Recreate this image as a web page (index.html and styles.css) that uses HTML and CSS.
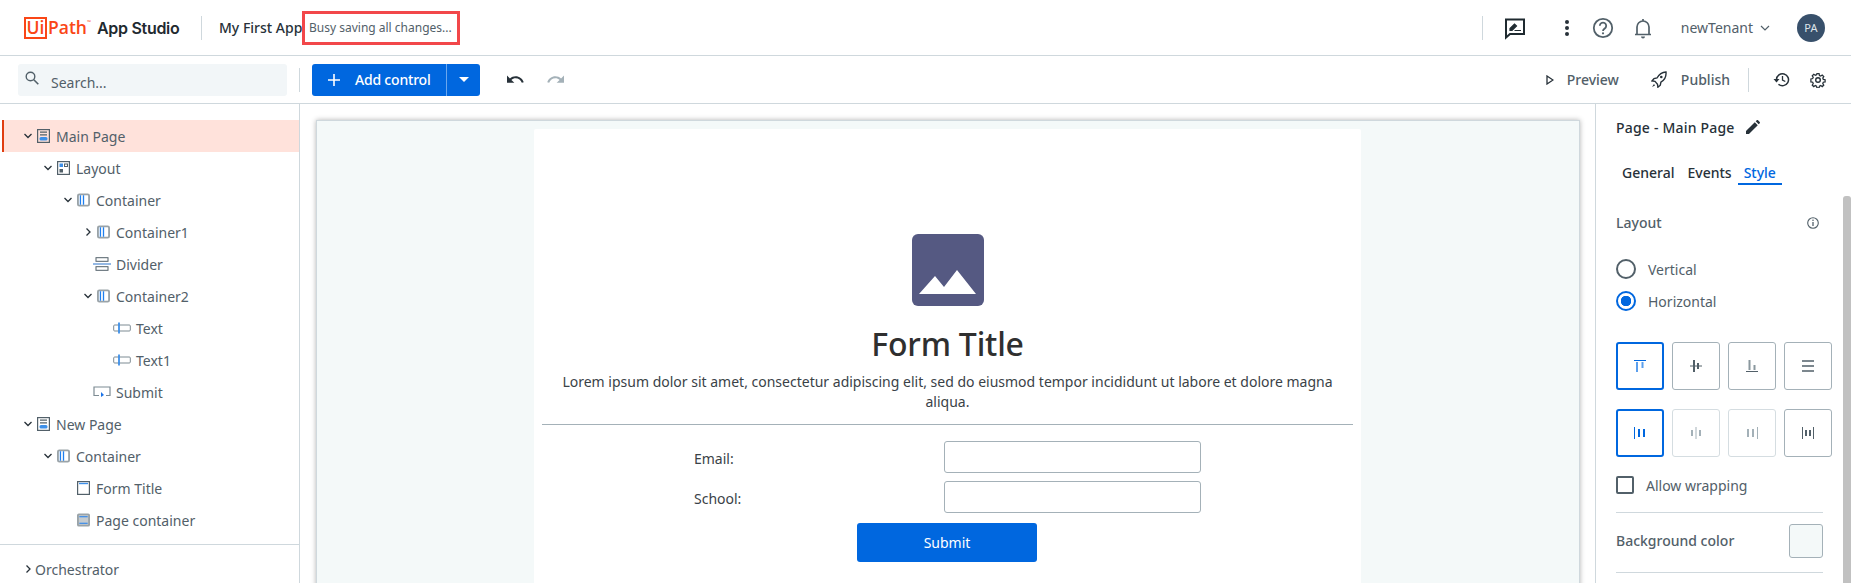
FILE: index.html
```html
<!DOCTYPE html>
<html lang="en">
<head>
    <meta charset="UTF-8">
    <title>UiPath App Studio</title>
    <link rel="stylesheet" href="styles.css">
</head>
<body>
    <header class="topbar">
        <div class="logo">
            <span class="logo-ui">Ui</span><span class="logo-path">Path</span><span class="logo-tm">™</span>
        </div>
        <span class="product">App Studio</span>
        <span class="vsep vsep-head"></span>
        <span class="app-name">My First App</span>
        <span class="busy">Busy saving all changes...</span>
        <div class="spacer"></div>
        <span class="vsep"></span>
        <svg class="top-icon feedback" width="24" height="24" viewBox="0 0 24 24"><path d="M3 3.500h18v14.500H7l-4 3.500z" fill="none" stroke="#1f2a30" stroke-width="2"/><path d="M7 14.500v-2l4.500-4.500 2 2-4.500 4.500zM11.500 14.500h6.500" fill="#1f2a30" stroke="#1f2a30" stroke-width="1.200"/></svg>
        <svg class="top-icon dots" width="6" height="18" viewBox="0 0 6 18"><circle cx="3" cy="3" r="2" fill="#273139"/><circle cx="3" cy="9" r="2" fill="#273139"/><circle cx="3" cy="15" r="2" fill="#273139"/></svg>
        <svg class="top-icon help" width="22" height="22" viewBox="0 0 22 22"><circle cx="11" cy="11" r="9.200" fill="none" stroke="#526069" stroke-width="1.800"/><path d="M7.800 8.800a3.200 3.200 0 1 1 4.800 2.800c-1 .6-1.600 1.100-1.600 2.400" fill="none" stroke="#526069" stroke-width="1.800"/><circle cx="11" cy="16.300" r="1.100" fill="#526069"/></svg>
        <svg class="top-icon bell" width="18" height="22" viewBox="0 0 18 22"><path d="M1 17.500h16M3 17.500v-7.500a6 6 0 0 1 12 0v7.500M9 2v2" fill="none" stroke="#526069" stroke-width="1.700"/><path d="M7 19.500h4a2 2 0 0 1-4 0z" fill="#526069"/></svg>
        <span class="tenant">newTenant</span>
        <svg class="tenant-chev" width="10" height="6" viewBox="0 0 10 6"><path d="M1 1l4 4 4-4" fill="none" stroke="#526069" stroke-width="1.200"/></svg>
        <span class="avatar">PA</span>
    </header>

    <div class="toolbar">
        <div class="search">
            <svg width="14" height="14" viewBox="0 0 14 14"><circle cx="5.500" cy="5.500" r="4.300" fill="none" stroke="#526069" stroke-width="1.400"/><path d="M8.800 8.800l4.500 4.500" stroke="#526069" stroke-width="1.600"/></svg>
            <span>Search...</span>
        </div>
        <span class="vsep vsep-tool"></span>
        <div class="add-btn">
            <span class="add-main">
                <svg width="14" height="14" viewBox="0 0 14 14"><path d="M7 1v12M1 7h12" stroke="#fff" stroke-width="1.600"/></svg>
                Add control
            </span>
            <span class="add-caret"><i></i></span>
        </div>
        <svg class="undo" width="18" height="10" viewBox="2 7 22 11"><path d="M12.500 8c-2.650 0-5.050.99-6.900 2.600L2 7v9h9l-3.620-3.620c1.390-1.160 3.160-1.880 5.120-1.880 3.540 0 6.550 2.310 7.600 5.500l2.370-.78C21.080 11.030 17.150 8 12.500 8z" fill="#273139"/></svg>
        <svg class="redo" width="18" height="10" viewBox="0 7 22 11"><path d="M18.400 10.600C16.550 8.990 14.150 8 11.500 8c-4.650 0-8.580 3.030-9.970 7.220L3.900 16c1.050-3.190 4.050-5.500 7.600-5.500 1.950 0 3.730.72 5.120 1.880L13 16h9V7l-3.600 3.600z" fill="#a4b1b8"/></svg>
        <div class="spacer"></div>
        <svg class="play" width="8" height="10" viewBox="0 0 8 10"><path d="M1 1l6 4-6 4z" fill="none" stroke="#273139" stroke-width="1.300"/></svg>
        <span class="tool-label preview">Preview</span>
        <svg class="rocket" width="16" height="17" viewBox="0 0 16 17"><path d="M15 1c-4 .3-7 2.500-9 6l-3 .6-2 2.400 3 .4 2.500 2.800.4 3 2.400-2 .6-3c3.500-2 5.500-5.500 5.100-10.200z" fill="none" stroke="#273139" stroke-width="1.400"/><circle cx="10.300" cy="6" r="1.300" fill="#273139"/><path d="M3 13l-2 3 3-1.500" fill="#273139"/></svg>
        <span class="tool-label publish">Publish</span>
        <span class="vsep vsep-pub"></span>
        <svg class="history" width="17" height="15" viewBox="0 0 17 15"><path d="M3.500 7.500a6 6 0 1 1 2 4.700" fill="none" stroke="#273139" stroke-width="1.500"/><path d="M0.500 7h6L3.500 10.500z" fill="#273139"/><path d="M9.500 4v4l2.800 1.500" fill="none" stroke="#273139" stroke-width="1.300"/></svg>
        <svg class="gear" width="16" height="16" viewBox="0 0 16 16"><circle cx="8" cy="8" r="2.300" fill="none" stroke="#273139" stroke-width="1.400"/><path d="M6.800 1h2.400l.4 2 1.400.6 1.700-1.100 1.700 1.700-1.100 1.700.6 1.400 2 .4v2.400l-2 .4-.6 1.400 1.100 1.700-1.700 1.700-1.700-1.100-1.400.6-.4 2H6.800l-.4-2-1.400-.6-1.700 1.100-1.700-1.700 1.100-1.700-.6-1.400-2-.4V6.800l2-.4.6-1.400-1.100-1.700 1.700-1.700 1.700 1.100 1.400-.6z" transform="translate(.8 .8) scale(.9)" fill="none" stroke="#273139" stroke-width="1.400"/></svg>
    </div>

    <div class="workspace">
        <aside class="tree">
            <ul class="tree-list">
                <li class="row lvl-0 selected">
                    <svg class="chev" viewBox="0 0 12 12"><path d="M2.500 4l3.500 3.500L9.500 4"/></svg>
                    <svg class="node" viewBox="0 0 13 14"><rect x=".6" y=".6" width="11.800" height="12.800" fill="none" stroke="#526069" stroke-width="1.200"/><path d="M3 3.200h7M3 5.800h7" stroke="#526069" stroke-width="1.200"/><rect x="2.500" y="8" width="8" height="3.500" rx="1.500" fill="#3d8fe8"/></svg>
                    Main Page
                </li>
                <li class="row lvl-1">
                    <svg class="chev" viewBox="0 0 12 12"><path d="M2.500 4l3.500 3.500L9.500 4"/></svg>
                    <svg class="node" viewBox="0 0 13 14"><rect x=".6" y=".6" width="11.800" height="12.800" fill="none" stroke="#526069" stroke-width="1.200"/><rect x="2.500" y="2.500" width="3.500" height="3.500" fill="#3d8fe8"/><rect x="7.500" y="3" width="3" height="2.500" fill="none" stroke="#526069"/><rect x="2.500" y="8" width="3.500" height="3.500" fill="#526069"/></svg>
                    Layout
                </li>
                <li class="row lvl-2">
                    <svg class="chev" viewBox="0 0 12 12"><path d="M2.500 4l3.500 3.500L9.500 4"/></svg>
                    <svg class="node" viewBox="0 0 14 14"><rect x="1" y="1" width="12" height="12" rx="1.500" fill="#fff" stroke="#9aa3a8" stroke-width="2"/><path d="M3.700 2v10M7 2v10" stroke="#1f7fee" stroke-width="1.400"/></svg>
                    Container
                </li>
                <li class="row lvl-3">
                    <svg class="chev" viewBox="0 0 12 12"><path d="M4.500 2.500L8 6l-3.500 3.500"/></svg>
                    <svg class="node" viewBox="0 0 14 14"><rect x="1" y="1" width="12" height="12" rx="1.500" fill="#fff" stroke="#9aa3a8" stroke-width="2"/><path d="M3.700 2v10M7 2v10" stroke="#1f7fee" stroke-width="1.400"/></svg>
                    Container1
                </li>
                <li class="row lvl-3">
                    <span class="no-chev"></span>
                    <svg class="node node-wide" viewBox="0 0 18 14"><rect x="3" y=".7" width="12" height="3.600" fill="none" stroke="#526069"/><rect x="3" y="9.700" width="12" height="3.600" fill="none" stroke="#526069"/><path d="M0 7h18" stroke="#7aa7de" stroke-width="1.600"/></svg>
                    Divider
                </li>
                <li class="row lvl-3">
                    <svg class="chev" viewBox="0 0 12 12"><path d="M2.500 4l3.500 3.500L9.500 4"/></svg>
                    <svg class="node" viewBox="0 0 14 14"><rect x="1" y="1" width="12" height="12" rx="1.500" fill="#fff" stroke="#9aa3a8" stroke-width="2"/><path d="M3.700 2v10M7 2v10" stroke="#1f7fee" stroke-width="1.400"/></svg>
                    Container2
                </li>
                <li class="row lvl-4">
                    <span class="no-chev"></span>
                    <svg class="node node-wide" viewBox="0 0 18 12"><rect x=".7" y="3" width="16.600" height="6" rx="1" fill="none" stroke="#7d8b93"/><path d="M6 .5v11" stroke="#3d8fe8" stroke-width="1.800"/></svg>
                    Text
                </li>
                <li class="row lvl-4">
                    <span class="no-chev"></span>
                    <svg class="node node-wide" viewBox="0 0 18 12"><rect x=".7" y="3" width="16.600" height="6" rx="1" fill="none" stroke="#7d8b93"/><path d="M6 .5v11" stroke="#3d8fe8" stroke-width="1.800"/></svg>
                    Text1
                </li>
                <li class="row lvl-3">
                    <span class="no-chev"></span>
                    <svg class="node node-wide" viewBox="0 0 18 12"><path d="M6 9.500H1V1h16v8.500h-4" fill="none" stroke="#7d8b93" stroke-width="1.200"/><path d="M8 6v5l3-2z" fill="#1a73e8"/></svg>
                    Submit
                </li>
                <li class="row lvl-0">
                    <svg class="chev" viewBox="0 0 12 12"><path d="M2.500 4l3.500 3.500L9.500 4"/></svg>
                    <svg class="node" viewBox="0 0 13 14"><rect x=".6" y=".6" width="11.800" height="12.800" fill="none" stroke="#526069" stroke-width="1.200"/><path d="M3 3.200h7M3 5.800h7" stroke="#526069" stroke-width="1.200"/><rect x="2.500" y="8" width="8" height="3.500" rx="1.500" fill="#3d8fe8"/></svg>
                    New Page
                </li>
                <li class="row lvl-1">
                    <svg class="chev" viewBox="0 0 12 12"><path d="M2.500 4l3.500 3.500L9.500 4"/></svg>
                    <svg class="node" viewBox="0 0 14 14"><rect x="1" y="1" width="12" height="12" rx="1.500" fill="#fff" stroke="#9aa3a8" stroke-width="2"/><path d="M3.700 2v10M7 2v10" stroke="#1f7fee" stroke-width="1.400"/></svg>
                    Container
                </li>
                <li class="row lvl-2">
                    <span class="no-chev"></span>
                    <svg class="node" viewBox="0 0 13 14"><rect x=".6" y=".6" width="11.800" height="12.800" fill="none" stroke="#526069" stroke-width="1.200"/><path d="M2 2.500h9" stroke="#3d8fe8" stroke-width="1.400"/></svg>
                    Form Title
                </li>
                <li class="row lvl-2">
                    <span class="no-chev"></span>
                    <svg class="node" viewBox="0 0 14 14"><rect x="1" y="1" width="12" height="12" rx="1" fill="#c5cbcf" stroke="#9aa3a8" stroke-width="2"/><path d="M2.500 3.500h9M2.500 10.500h9" stroke="#1f7fee" stroke-width="1.300"/></svg>
                    Page container
                </li>
            </ul>
            <div class="tree-foot">
                <svg class="chev" viewBox="0 0 12 12"><path d="M4.500 2.500L8 6l-3.500 3.500"/></svg>
                Orchestrator
            </div>
        </aside>

        <main class="stage">
            <div class="canvas">
                <div class="form-page">
                    <div class="logo-box">
                        <svg width="57" height="24" viewBox="0 0 57 24"><path d="M0 24L16 6l9 11L38 0l19 24z" fill="#fff"/></svg>
                    </div>
                    <h1 class="form-title">Form Title</h1>
                    <p class="form-desc">Lorem ipsum dolor sit amet, consectetur adipiscing elit, sed do eiusmod tempor incididunt ut labore et dolore magna aliqua.</p>
                    <hr class="form-rule">
                    <div class="field">
                        <label>Email:</label>
                        <span class="input"></span>
                    </div>
                    <div class="field">
                        <label>School:</label>
                        <span class="input"></span>
                    </div>
                    <button class="submit">Submit</button>
                </div>
            </div>
        </main>

        <aside class="props">
            <div class="props-title">
                Page - Main Page
                <svg width="14" height="14" viewBox="0 0 15 15"><path d="M0 15v-3.200L9.400 2.400l3.200 3.200L3.200 15zM10.400 1.400L11.500.3c.4-.4 1-.4 1.400 0l1.800 1.800c.4.4.4 1 0 1.400l-1.100 1.100z" fill="#273139"/></svg>
            </div>
            <div class="tabs">
                <span class="tab">General</span>
                <span class="tab">Events</span>
                <span class="tab active">Style</span>
            </div>
            <div class="section-head">
                <span>Layout</span>
                <svg width="12" height="12" viewBox="0 0 12 12"><circle cx="6" cy="6" r="5.300" fill="none" stroke="#526069" stroke-width="1.100"/><path d="M6 5v4" stroke="#526069" stroke-width="1.300"/><circle cx="6" cy="3.300" r=".8" fill="#526069"/></svg>
            </div>
            <div class="radio-row"><span class="radio"></span>Vertical</div>
            <div class="radio-row"><span class="radio checked"></span>Horizontal</div>

            <div class="align-grid">
                <span class="align on"><svg viewBox="0 0 12 12"><path d="M0 .5h12" stroke="#0067df"/><path d="M3 2v10M8.500 2v6" stroke="#5b9fed" stroke-width="2"/></svg></span>
                <span class="align"><svg viewBox="0 0 12 12"><path d="M0 6h12" stroke="#526069"/><path d="M4 0v12M8 3v6" stroke="#526069" stroke-width="2"/></svg></span>
                <span class="align"><svg viewBox="0 0 12 12"><path d="M0 11.500h12" stroke="#526069"/><path d="M3.500 0v10M8.500 5v5" stroke="#8a979e" stroke-width="2"/></svg></span>
                <span class="align"><svg viewBox="0 0 12 12"><path d="M0 1h12M0 6h12M0 11h12" stroke="#526069" stroke-width="1.300"/></svg></span>
                <span class="align on"><svg viewBox="0 0 12 12"><path d="M.5 0v12" stroke="#0067df"/><path d="M5 2v8M10 2v8" stroke="#0067df" stroke-width="2"/></svg></span>
                <span class="align off"><svg viewBox="0 0 12 12"><path d="M6 0v12" stroke="#a4b1b8"/><path d="M2 3v6M10 3v6" stroke="#a4b1b8" stroke-width="2"/></svg></span>
                <span class="align off"><svg viewBox="0 0 12 12"><path d="M11.500 0v12" stroke="#a4b1b8"/><path d="M2 2v8M7 2v8" stroke="#a4b1b8" stroke-width="2"/></svg></span>
                <span class="align"><svg viewBox="0 0 12 12"><path d="M.5 0v12M11.500 0v12" stroke="#526069"/><path d="M4 3v6M8 3v6" stroke="#526069" stroke-width="2"/></svg></span>
            </div>

            <div class="check-row"><span class="checkbox"></span>Allow wrapping</div>
            <div class="color-row">
                <span>Background color</span>
                <span class="swatch"></span>
            </div>
            <div class="props-scroll"></div>
        </aside>
    </div>
</body>
</html>
```

FILE: styles.css
```css
* {
    box-sizing: border-box;
}
html, body {
    height: 100%;
}
body {
    margin: 0;
    font-family: "Noto Sans", Arial, sans-serif;
    font-size: 14px;
    color: #526069;
    background: #fff;
    overflow: hidden;
    display: flex;
    flex-direction: column;
}
.spacer {
    flex: 1;
}
.vsep {
    display: block;
    width: 1px;
    height: 24px;
    background: #cfd8dd;
}

/* top bar */
.topbar {
    height: 56px;
    flex: none;
    display: flex;
    align-items: center;
    padding-left: 24px;
    border-bottom: 1px solid #cfd8dd;
}
.logo {
    display: flex;
    align-items: center;
    font-family: "Open Sans", sans-serif;
    font-weight: 600;
    color: #fa4616;
    font-size: 17.500px;
    line-height: 1;
    width: 65px;
    flex: none;
}
.logo-ui {
    width: 23px;
    height: 22px;
    border: 2px solid #fa4616;
    line-height: 17px;
    text-align: center;
    flex: none;
}
.logo-path {
    margin-left: 1px;
}
.logo-tm {
    font-size: 5px;
    align-self: flex-start;
    margin-top: 3px;
}
.product {
    font-family: Inter, sans-serif;
    font-weight: 600;
    font-size: 16px;
    color: #1f2a30;
    letter-spacing: -0.3px;
    width: 84px;
    margin-left: 8px;
    white-space: nowrap;
}
.vsep-head {
    margin-left: 20px;
}
.app-name {
    margin-left: 17px;
    font-size: 14px;
    font-weight: 500;
    color: #273139;
    white-space: nowrap;
    width: 83px;
    flex: none;
}
.busy {
    width: 158px;
    height: 34px;
    border: 3px solid #f2474a;
    font-size: 12px;
    line-height: 28px;
    padding-left: 4px;
    white-space: nowrap;
    color: #526069;
}
.top-icon {
    flex: none;
}
.feedback {
    margin-left: 20px;
}
.dots {
    margin-left: 37px;
}
.help {
    margin-left: 22px;
}
.bell {
    margin-left: 20px;
}
.tenant {
    margin-left: 29px;
    color: #526069;
    font-size: 14px;
}
.tenant-chev {
    margin-left: 7px;
}
.avatar {
    width: 28px;
    height: 28px;
    border-radius: 50%;
    background: #38506b;
    color: #dfe5ea;
    font-size: 11px;
    letter-spacing: 0.3px;
    text-align: center;
    line-height: 28px;
    margin-left: 27px;
    margin-right: 26px;
}

/* toolbar */
.toolbar {
    height: 48px;
    flex: none;
    display: flex;
    align-items: center;
    padding-left: 18px;
    border-bottom: 1px solid #cfd8dd;
}
.search {
    width: 269px;
    height: 32px;
    background: #f2f6f8;
    border-radius: 3px;
    display: flex;
    align-items: center;
    padding-left: 7px;
    font-size: 14px;
    color: #526069;
}
.search svg {
    margin-top: -3px;
}
.search span {
    margin-left: 12px;
    padding-top: 5px;
}
.vsep-tool {
    margin-left: 12px;
}
.add-btn {
    margin-left: 12px;
    width: 168px;
    height: 32px;
    background: #0067df;
    border-radius: 3px;
    color: #fff;
    font-size: 14px;
    font-weight: 500;
    display: flex;
    align-items: center;
}
.add-main {
    width: 135px;
    display: flex;
    align-items: center;
    gap: 14px;
    padding-left: 15px;
    white-space: nowrap;
    height: 100%;
    border-right: 1px solid #6aa7ee;
    letter-spacing: -0.2px;
}
.add-caret {
    flex: 1;
    display: flex;
    justify-content: center;
}
.add-caret i {
    display: block;
    border-left: 5px solid transparent;
    border-right: 5px solid transparent;
    border-top: 5px solid #fff;
}
.undo {
    margin-left: 27px;
}
.redo {
    margin-left: 21px;
}
.play {
    margin-right: 13px;
}
.tool-label {
    color: #526069;
    font-weight: 500;
    font-size: 14px;
}
.rocket {
    margin-left: 32px;
}
.publish {
    margin-left: 14px;
}
.vsep-pub {
    margin-left: 18px;
}
.history {
    margin-left: 24px;
}
.gear {
    margin-left: 20px;
    margin-right: 25px;
}

/* main area */
.workspace {
    flex: 1;
    display: flex;
    min-height: 0;
}
.tree {
    width: 300px;
    flex: none;
    border-right: 1px solid #cfd8dd;
    padding-top: 16px;
}
.tree-list {
    list-style: none;
    margin: 0;
    padding: 0 0 8px 2px;
    border-bottom: 1px solid #cfd8dd;
}
.row {
    height: 32px;
    display: flex;
    align-items: center;
    white-space: nowrap;
    font-size: 14px;
}
.selected {
    background: #ffe2db;
    border-left: 2px solid #e03d10;
}
.lvl-0 {
    padding-left: 20px;
}
.lvl-0.selected {
    padding-left: 18px;
}
.lvl-1 {
    padding-left: 40px;
}
.lvl-2 {
    padding-left: 60px;
}
.lvl-3 {
    padding-left: 80px;
}
.lvl-4 {
    padding-left: 100px;
}
.chev {
    width: 12px;
    height: 12px;
    flex: none;
    fill: none;
    stroke: #273139;
    stroke-width: 1.300;
}
.no-chev {
    width: 12px;
    flex: none;
}
.node {
    width: 13px;
    height: 14px;
    flex: none;
    margin: 0 6px 0 3px;
}
.node-wide {
    width: 18px;
    height: 14px;
    margin-left: -1px;
    margin-right: 5px;
}
.tree-foot {
    display: flex;
    align-items: center;
    padding-left: 22px;
    height: 32px;
    margin-top: 8px;
}
.tree-foot .chev {
    margin-right: 1px;
}

.stage {
    flex: 1;
    min-width: 0;
    padding: 16px 15px 0 16px;
    overflow: hidden;
}
.canvas {
    height: 500px;
    background: #f4f9f9;
    border: 1px solid #cfd8dd;
    box-shadow: 0 0 5px rgba(0, 0, 0, 0.3);
    padding: 8px 218px 0 217px;
}
.form-page {
    background: #fff;
    height: 100%;
    padding: 0 8px;
    border-radius: 2px;
    display: flex;
    flex-direction: column;
    align-items: center;
}
.logo-box {
    margin-top: 105px;
    width: 72px;
    height: 72px;
    border-radius: 6px;
    background: #555982;
    display: flex;
    align-items: flex-end;
    justify-content: center;
    padding-bottom: 12px;
    flex: none;
}
.form-title {
    margin: 16px 0 0;
    font-size: 32px;
    font-weight: 500;
    line-height: 44px;
    letter-spacing: -0.2px;
    color: #2f2f2f;
}
.form-desc {
    margin: 6px 0 0;
    color: #3a4247;
    font-size: 14px;
    line-height: 20px;
    text-align: center;
    width: 790px;
}
.form-rule {
    width: 100%;
    margin: 12px 0 0;
    border: none;
    border-top: 1px solid #a4b1b8;
}
.field {
    width: 100%;
    display: flex;
    align-items: center;
    height: 32px;
    margin-top: 8px;
    color: #3a4247;
    font-size: 14px;
}
.form-rule + .field {
    margin-top: 16px;
}
.field label {
    margin-left: 152px;
    width: 250px;
    padding-top: 2px;
}
.input {
    width: 257px;
    height: 32px;
    border: 1px solid #a4b1b8;
    border-radius: 3px;
    background: #fff;
}
.submit {
    margin-top: 10px;
    margin-left: -1px;
    width: 180px;
    height: 39px;
    background: #0067df;
    color: #fff;
    border: none;
    border-radius: 3px;
    font-family: inherit;
    font-size: 14px;
}

/* properties */
.props {
    position: relative;
    width: 256px;
    flex: none;
    border-left: 1px solid #cfd8dd;
    padding: 13px 0 0 20px;
}
.props-title {
    display: flex;
    align-items: center;
    gap: 11px;
    color: #273139;
    font-size: 14px;
    font-weight: 500;
    letter-spacing: 0.2px;
    height: 20px;
}
.tabs {
    display: flex;
    margin-top: 26px;
    padding-left: 6px;
    gap: 13px;
}
.tab {
    color: #273139;
    font-size: 14px;
    font-weight: 500;
    line-height: 20px;
    height: 22px;
}
.tab.active {
    color: #0067df;
    border-bottom: 2px solid #0067df;
    padding: 0 6px;
    margin-left: -7px;
}
.section-head {
    display: flex;
    justify-content: space-between;
    align-items: center;
    width: 203px;
    margin-top: 28px;
    font-weight: 500;
    font-size: 14px;
}
.radio-row {
    display: flex;
    align-items: center;
    height: 32px;
    font-size: 14px;
}
.section-head + .radio-row {
    margin-top: 21px;
}
.radio {
    width: 20px;
    height: 20px;
    border: 2px solid #526069;
    border-radius: 50%;
    margin-right: 12px;
}
.radio.checked {
    border-color: #0067df;
    background: radial-gradient(circle, #0067df 0 5px, #fff 5.500px);
}
.align-grid {
    display: grid;
    grid-template-columns: repeat(4, 48px);
    grid-auto-rows: 48px;
    column-gap: 8px;
    row-gap: 19px;
    margin-top: 25px;
}
.align {
    border: 1px solid #a4b1b8;
    border-radius: 3px;
    display: flex;
    align-items: center;
    justify-content: center;
}
.align svg {
    width: 12px;
    height: 12px;
}
.align.on {
    border: 2px solid #0067df;
}
.align.off {
    border-color: #d5dde1;
}
.check-row {
    display: flex;
    align-items: center;
    gap: 12px;
    margin-top: 19px;
    height: 18px;
}
.checkbox {
    width: 18px;
    height: 18px;
    border: 2px solid #526069;
    border-radius: 2px;
}
.color-row {
    display: flex;
    align-items: center;
    justify-content: space-between;
    width: 207px;
    height: 61px;
    margin-top: 18px;
    padding-bottom: 4px;
    border-top: 1px solid #cfd8dd;
    border-bottom: 1px solid #cfd8dd;
    font-weight: 500;
}
.swatch {
    width: 34px;
    height: 34px;
    background: #f4f9f9;
    border: 1px solid #a4b1b8;
    border-radius: 3px;
}
.props-scroll {
    position: absolute;
    right: 0;
    top: 92px;
    bottom: 0;
    width: 8px;
    background: #c1c1c1;
    border-radius: 3px 3px 0 0;
}
```
